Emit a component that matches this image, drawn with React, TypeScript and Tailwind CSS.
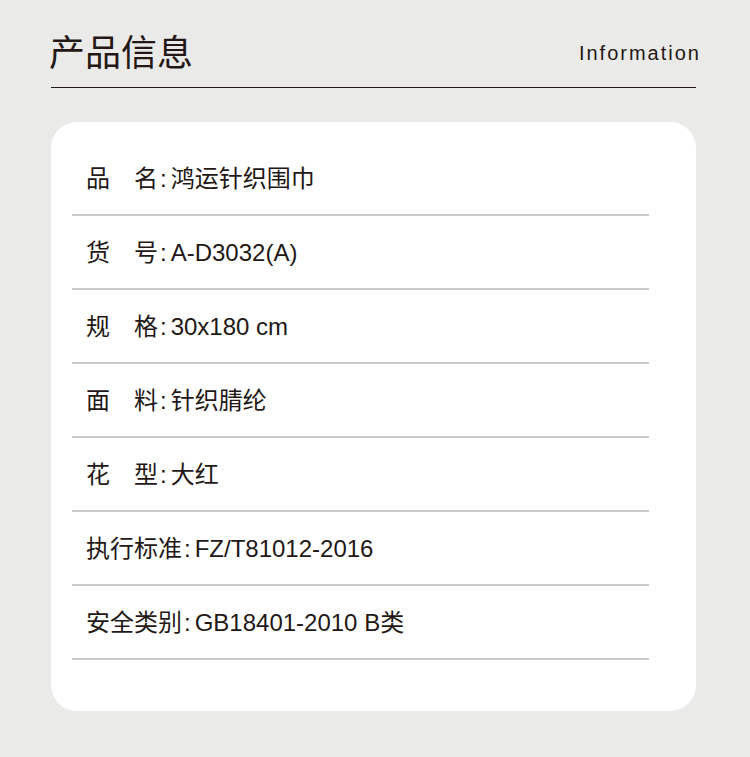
const rows: { label: string[]; value: string }[] = [
  { label: ['品', '名'], value: '鸿运针织围巾' },
  { label: ['货', '号'], value: 'A-D3032(A)' },
  { label: ['规', '格'], value: '30x180 cm' },
  { label: ['面', '料'], value: '针织腈纶' },
  { label: ['花', '型'], value: '大红' },
  { label: ['执行标准'], value: 'FZ/T81012-2016' },
  { label: ['安全类别'], value: 'GB18401-2010 B类' },
];

const font = { fontFamily: '"Liberation Sans", "Noto Sans CJK SC", sans-serif' };

const App = () => {
  return (
    <div className="w-[750px] h-[757px] bg-[#eaeae8] text-[#231815] pl-[51px] pt-[28px]" style={font}>
      <div className="w-[645px] flex items-end justify-between">
        <h1 className="text-[36px] leading-[44px] ml-[-2px]" style={{ fontFamily: '"Noto Sans CJK SC", sans-serif' }}>
          产品信息
        </h1>
        <span className="text-[20px] leading-[24px] tracking-[0.1em] mb-[7px] mr-[-5px]">Information</span>
      </div>
      <div className="w-[645px] mt-[15px] h-px bg-[#231815]" />

      <div className="w-[645px] mt-[34px] bg-white rounded-[26px] pt-[20px] pb-[51px] pl-[21px] pr-[47px]">
        {rows.map((row, i) => (
          <div key={i} className="h-[74px] flex items-center border-b-2 border-[#c9c9c9] pl-[14px] pt-[2px]">
            <div className="flex text-[24px] leading-[30px]">
              {row.label.length === 2 ? (
                <>
                  <span className="w-[48px]">{row.label[0]}</span>
                  <span>{row.label[1]}</span>
                </>
              ) : (
                <span>{row.label[0]}</span>
              )}
              <span className="ml-[2px] mr-[4px]">:</span>
              <span>{row.value}</span>
            </div>
          </div>
        ))}
      </div>
    </div>
  );
};

export default App;
